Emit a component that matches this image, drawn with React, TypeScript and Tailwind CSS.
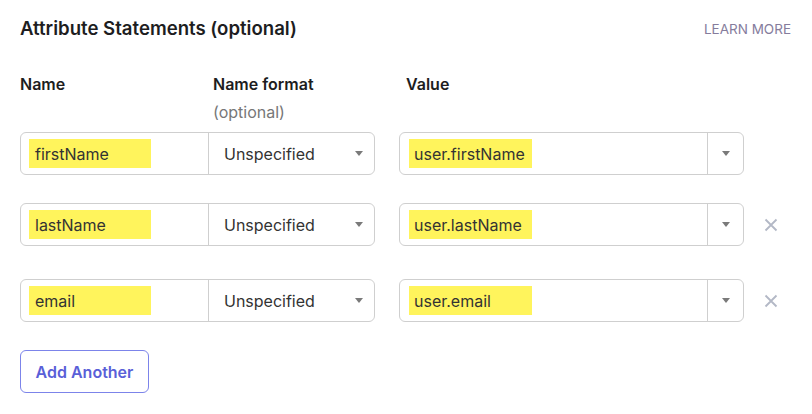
import React from "react";

type Row = { name: string; value: string; removable: boolean };

const rows: Row[] = [
  { name: "firstName", value: "user.firstName", removable: false },
  { name: "lastName", value: "user.lastName", removable: true },
  { name: "email", value: "user.email", removable: true },
];

function Caret() {
  return (
    <svg width="8" height="5" viewBox="0 0 8 5" className="text-[#7a7a7a]">
      <path d="M0 0h8L4 5z" fill="currentColor" />
    </svg>
  );
}

function Remove() {
  return (
    <svg width="14" height="14" viewBox="0 0 14 14" className="text-[#b3b8c6]">
      <path d="M1.5 1.5l11 11M12.5 1.5l-11 11" stroke="currentColor" strokeWidth="1.8" />
    </svg>
  );
}

function AttributeRow({ row }: { row: Row }) {
  return (
    <div className="flex items-center">
      {/* name + format */}
      <div className="flex h-[43px] w-[355px] rounded-md border border-[#cfcfcf]">
        <div className="flex w-[188px] items-center border-r border-[#cfcfcf] pl-2">
          <span className="flex h-[29px] w-[122px] items-center bg-[#fff45c] pl-1.5 text-base text-[#333]">
            {row.name}
          </span>
        </div>
        <div className="flex flex-1 items-center justify-between pl-[15px] pr-[11px]">
          <span className="text-base text-[#333]">Unspecified</span>
          <Caret />
        </div>
      </div>

      {/* value */}
      <div className="ml-6 flex h-[43px] w-[345px] rounded-md border border-[#cfcfcf]">
        <div className="flex flex-1 items-center border-r border-[#cfcfcf] pl-[9px]">
          <span className="flex h-[29px] w-[123px] items-center bg-[#fff45c] pl-[5px] text-base text-[#333]">
            {row.value}
          </span>
        </div>
        <div className="flex w-[35px] items-center justify-center">
          <Caret />
        </div>
      </div>

      {row.removable && (
        <div className="ml-5 flex items-center">
          <Remove />
        </div>
      )}
    </div>
  );
}

export default function App() {
  return (
    <div className="h-[414px] w-[812px] bg-white px-5 pt-[17px] font-['Inter',sans-serif] text-[#1d1d21]">
      {/* header */}
      <div className="flex h-6 items-center justify-between">
        <h2 className="text-[18.6px] font-semibold">Attribute Statements (optional)</h2>
        <a className="mr-px text-[13.5px] text-[#857c9c]">LEARN MORE</a>
      </div>

      {/* column labels */}
      <div className="mt-[33px] flex text-base">
        <div className="w-[188px] font-semibold leading-5">Name</div>
        <div className="w-[190px] pl-[5px]">
          <div className="font-semibold leading-5">Name format</div>
          <div className="mt-2 leading-5 text-[#777]">(optional)</div>
        </div>
        <div className="pl-2 font-semibold leading-5">Value</div>
      </div>

      <div className="mt-[10px] flex flex-col">
        <AttributeRow row={rows[0]} />
        <div className="mt-[28px]">
          <AttributeRow row={rows[1]} />
        </div>
        <div className="mt-[33px]">
          <AttributeRow row={rows[2]} />
        </div>
      </div>

      <button className="mt-[28px] h-[43px] w-[129px] rounded-md border border-[#7c84ea] text-base font-semibold text-[#5a5fd8]">
        Add Another
      </button>
    </div>
  );
}
